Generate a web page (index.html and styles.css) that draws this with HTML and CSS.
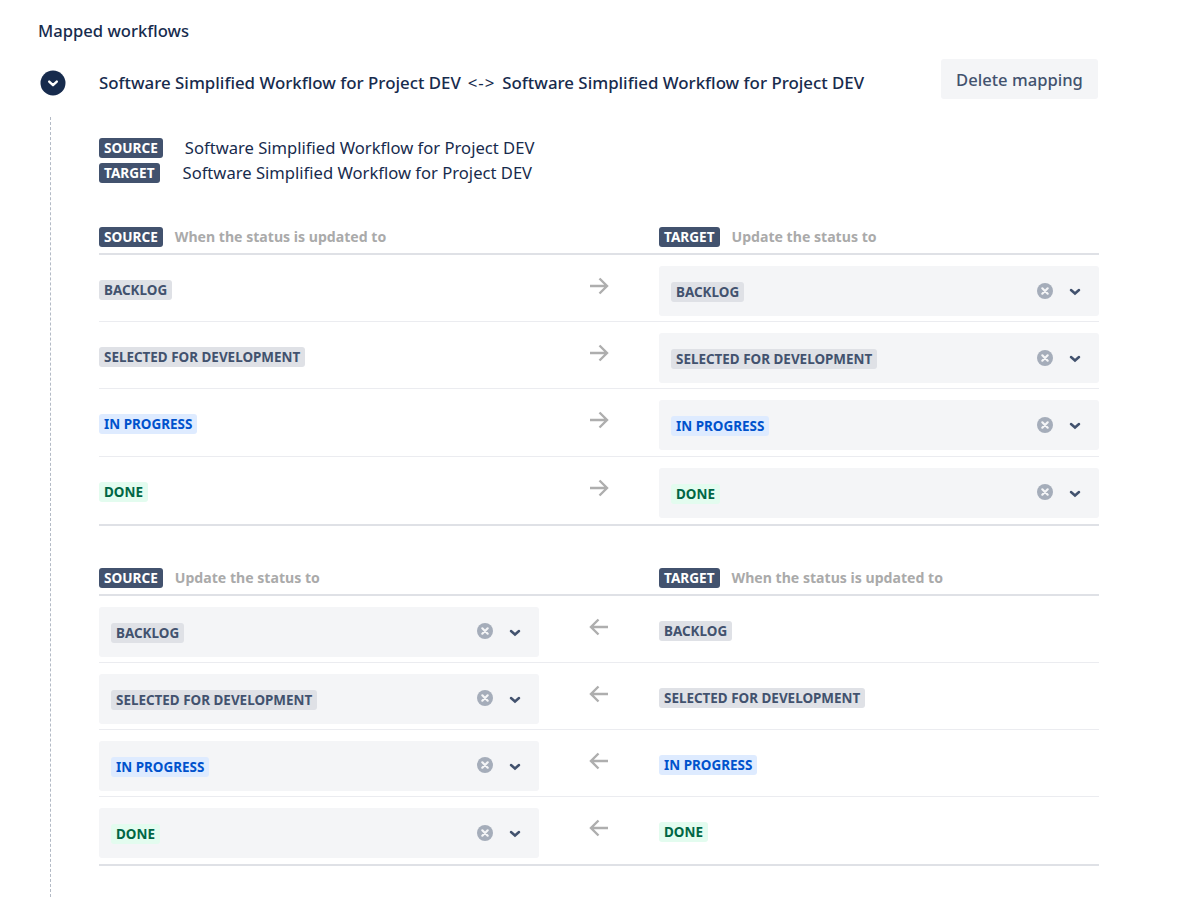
FILE: index.html
```html
<!DOCTYPE html>
<html lang="en">
<head>
<meta charset="utf-8">
<title>Mapped workflows</title>
<link rel="stylesheet" href="styles.css">
</head>
<body>
<main class="page">
  <h1 class="title">Mapped workflows</h1>
  <div class="map-head">
    <button class="toggle" aria-label="Collapse"><svg width="26" height="26" viewBox="0 0 26 26"><circle cx="13" cy="13" r="12.5" fill="#172b4d"/><path d="M9.2 11.6 13 15.2l3.8-3.6" fill="none" stroke="#fff" stroke-width="2.4" stroke-linecap="round" stroke-linejoin="round"/></svg></button>
    <div class="map-title">Software Simplified Workflow for Project DEV <span class="swap">&lt;-&gt;</span> Software Simplified Workflow for Project DEV</div>
    <button class="delete">Delete mapping</button>
  </div>
  <div class="map-body">
    <div class="legend">
      <div class="legend-row"><span class="tag">SOURCE</span><span class="legend-name source-name">Software Simplified Workflow for Project DEV</span></div>
      <div class="legend-row"><span class="tag">TARGET</span><span class="legend-name target-name">Software Simplified Workflow for Project DEV</span></div>
    </div>

    <section class="table">
      <div class="row head">
        <div class="head-cell"><span class="tag">SOURCE</span><span class="hint">When the status is updated to</span></div>
        <div></div>
        <div class="head-cell"><span class="tag">TARGET</span><span class="hint">Update the status to</span></div>
      </div>
      <div class="row">
        <div class="plain"><span class="loz grey">BACKLOG</span></div>
        <div class="arrow"><svg width="20" height="18" viewBox="0 0 20 18"><path d="M1 9h17M10.500 1.500 18 9l-7.500 7.500" fill="none" stroke="#aeaeae" stroke-width="2.400"/></svg></div>
        <div class="select"><span class="loz grey">BACKLOG</span><svg class="clear" width="16" height="16" viewBox="0 0 16 16"><circle cx="8" cy="8" r="8" fill="#a5adba"/><path d="m5.300 5.300 5.400 5.400m0-5.400-5.400 5.400" stroke="#f4f5f7" stroke-width="2.200" stroke-linecap="round"/></svg><svg class="chev" width="12" height="8" viewBox="0 0 12 8"><path d="M2 2 6 5.500 10 2" fill="none" stroke="#42526e" stroke-width="2.500" stroke-linecap="round"/></svg></div>
      </div>
      <div class="row">
        <div class="plain"><span class="loz grey">SELECTED FOR DEVELOPMENT</span></div>
        <div class="arrow"><svg width="20" height="18" viewBox="0 0 20 18"><path d="M1 9h17M10.500 1.500 18 9l-7.500 7.500" fill="none" stroke="#aeaeae" stroke-width="2.400"/></svg></div>
        <div class="select"><span class="loz grey">SELECTED FOR DEVELOPMENT</span><svg class="clear" width="16" height="16" viewBox="0 0 16 16"><circle cx="8" cy="8" r="8" fill="#a5adba"/><path d="m5.300 5.300 5.400 5.400m0-5.400-5.400 5.400" stroke="#f4f5f7" stroke-width="2.200" stroke-linecap="round"/></svg><svg class="chev" width="12" height="8" viewBox="0 0 12 8"><path d="M2 2 6 5.500 10 2" fill="none" stroke="#42526e" stroke-width="2.500" stroke-linecap="round"/></svg></div>
      </div>
      <div class="row">
        <div class="plain"><span class="loz blue">IN PROGRESS</span></div>
        <div class="arrow"><svg width="20" height="18" viewBox="0 0 20 18"><path d="M1 9h17M10.500 1.500 18 9l-7.500 7.500" fill="none" stroke="#aeaeae" stroke-width="2.400"/></svg></div>
        <div class="select"><span class="loz blue">IN PROGRESS</span><svg class="clear" width="16" height="16" viewBox="0 0 16 16"><circle cx="8" cy="8" r="8" fill="#a5adba"/><path d="m5.300 5.300 5.400 5.400m0-5.400-5.400 5.400" stroke="#f4f5f7" stroke-width="2.200" stroke-linecap="round"/></svg><svg class="chev" width="12" height="8" viewBox="0 0 12 8"><path d="M2 2 6 5.500 10 2" fill="none" stroke="#42526e" stroke-width="2.500" stroke-linecap="round"/></svg></div>
      </div>
      <div class="row last">
        <div class="plain"><span class="loz green">DONE</span></div>
        <div class="arrow"><svg width="20" height="18" viewBox="0 0 20 18"><path d="M1 9h17M10.500 1.500 18 9l-7.500 7.500" fill="none" stroke="#aeaeae" stroke-width="2.400"/></svg></div>
        <div class="select"><span class="loz green">DONE</span><svg class="clear" width="16" height="16" viewBox="0 0 16 16"><circle cx="8" cy="8" r="8" fill="#a5adba"/><path d="m5.300 5.300 5.400 5.400m0-5.400-5.400 5.400" stroke="#f4f5f7" stroke-width="2.200" stroke-linecap="round"/></svg><svg class="chev" width="12" height="8" viewBox="0 0 12 8"><path d="M2 2 6 5.500 10 2" fill="none" stroke="#42526e" stroke-width="2.500" stroke-linecap="round"/></svg></div>
      </div>
    </section>

    <section class="table second">
      <div class="row head">
        <div class="head-cell"><span class="tag">SOURCE</span><span class="hint">Update the status to</span></div>
        <div></div>
        <div class="head-cell"><span class="tag">TARGET</span><span class="hint">When the status is updated to</span></div>
      </div>
      <div class="row">
        <div class="select"><span class="loz grey">BACKLOG</span><svg class="clear" width="16" height="16" viewBox="0 0 16 16"><circle cx="8" cy="8" r="8" fill="#a5adba"/><path d="m5.300 5.300 5.400 5.400m0-5.400-5.400 5.400" stroke="#f4f5f7" stroke-width="2.200" stroke-linecap="round"/></svg><svg class="chev" width="12" height="8" viewBox="0 0 12 8"><path d="M2 2 6 5.500 10 2" fill="none" stroke="#42526e" stroke-width="2.500" stroke-linecap="round"/></svg></div>
        <div class="arrow"><svg width="20" height="18" viewBox="0 0 20 18"><path d="M19 9H2M9.500 1.500 2 9l7.500 7.500" fill="none" stroke="#aeaeae" stroke-width="2.400"/></svg></div>
        <div class="plain"><span class="loz grey">BACKLOG</span></div>
      </div>
      <div class="row">
        <div class="select"><span class="loz grey">SELECTED FOR DEVELOPMENT</span><svg class="clear" width="16" height="16" viewBox="0 0 16 16"><circle cx="8" cy="8" r="8" fill="#a5adba"/><path d="m5.300 5.300 5.400 5.400m0-5.400-5.400 5.400" stroke="#f4f5f7" stroke-width="2.200" stroke-linecap="round"/></svg><svg class="chev" width="12" height="8" viewBox="0 0 12 8"><path d="M2 2 6 5.500 10 2" fill="none" stroke="#42526e" stroke-width="2.500" stroke-linecap="round"/></svg></div>
        <div class="arrow"><svg width="20" height="18" viewBox="0 0 20 18"><path d="M19 9H2M9.500 1.500 2 9l7.500 7.500" fill="none" stroke="#aeaeae" stroke-width="2.400"/></svg></div>
        <div class="plain"><span class="loz grey">SELECTED FOR DEVELOPMENT</span></div>
      </div>
      <div class="row">
        <div class="select"><span class="loz blue">IN PROGRESS</span><svg class="clear" width="16" height="16" viewBox="0 0 16 16"><circle cx="8" cy="8" r="8" fill="#a5adba"/><path d="m5.300 5.300 5.400 5.400m0-5.400-5.400 5.400" stroke="#f4f5f7" stroke-width="2.200" stroke-linecap="round"/></svg><svg class="chev" width="12" height="8" viewBox="0 0 12 8"><path d="M2 2 6 5.500 10 2" fill="none" stroke="#42526e" stroke-width="2.500" stroke-linecap="round"/></svg></div>
        <div class="arrow"><svg width="20" height="18" viewBox="0 0 20 18"><path d="M19 9H2M9.500 1.500 2 9l7.500 7.500" fill="none" stroke="#aeaeae" stroke-width="2.400"/></svg></div>
        <div class="plain"><span class="loz blue">IN PROGRESS</span></div>
      </div>
      <div class="row last">
        <div class="select"><span class="loz green">DONE</span><svg class="clear" width="16" height="16" viewBox="0 0 16 16"><circle cx="8" cy="8" r="8" fill="#a5adba"/><path d="m5.300 5.300 5.400 5.400m0-5.400-5.400 5.400" stroke="#f4f5f7" stroke-width="2.200" stroke-linecap="round"/></svg><svg class="chev" width="12" height="8" viewBox="0 0 12 8"><path d="M2 2 6 5.500 10 2" fill="none" stroke="#42526e" stroke-width="2.500" stroke-linecap="round"/></svg></div>
        <div class="arrow"><svg width="20" height="18" viewBox="0 0 20 18"><path d="M19 9H2M9.500 1.500 2 9l7.500 7.500" fill="none" stroke="#aeaeae" stroke-width="2.400"/></svg></div>
        <div class="plain"><span class="loz green">DONE</span></div>
      </div>
    </section>
  </div>
</main>
</body>
</html>
```

FILE: styles.css
```css
* { box-sizing: border-box; }
html, body { margin: 0; background: #fff; }
body {
  height: 907px;
  overflow: hidden;
  font-family: "Noto Sans", "Open Sans", sans-serif;
  color: #172b4d;
}
.page { padding: 20px 86px 0 38px; }
.title { margin: 0; font-size: 16.6px; line-height: 22px; font-weight: 500; }
.map-head { display: flex; align-items: center; height: 40px; margin-top: 17px; padding-left: 2px; }
.toggle { width: 26px; height: 26px; padding: 0; border: 0; background: none; flex: none; margin-top: 7px; }
.toggle svg { display: block; }
.map-title { margin-left: 33px; flex: 1; font-size: 16.85px; font-weight: 500; line-height: 22px; margin-top: 7px; white-space: nowrap; }
.swap { margin: 0 2.5px; font-weight: 400; letter-spacing: 1px; }
.delete {
  width: 157px; height: 40px; margin-right: 1px; border: 0; border-radius: 3px; background: #f4f5f7;
  color: #42526e; font: 500 16.6px/22px "Noto Sans", sans-serif; padding: 1px 0 0;
}
.map-body { margin: 18px 0 0 12px; padding: 18px 0 0 48px; border-left: 1px dashed #b3bac5; height: 780px; }
.legend-row { display: flex; align-items: center; height: 25px; }
.tag {
  display: inline-block; height: 20px; padding: 0 5px; border-radius: 3px; background: #42526e;
  color: #fff; font-size: 13.6px; font-weight: 700; line-height: 20px; flex: none;
}
.legend-name { font-size: 16.6px; line-height: 22px; color: #172b4d; }
.source-name { margin-left: 22px; }
.target-name { margin-left: 23px; }
.table { margin-top: 39px; }
.second { margin-top: 39px; }
.row {
  display: grid; grid-template-columns: 440px 120px 440px;
  height: 67.2px; border-bottom: 1px solid #ebecf0; align-items: start;
}
.row.head { height: 31px; border-bottom: 2px solid #dfe1e6; }
.row.last { height: 69px; border-bottom: 2px solid #dfe1e6; }
.head-cell { display: flex; align-items: center; height: 24px; margin-top: 1px; }
.hint { margin-left: 12px; color: #aaa; font-size: 14.1px; font-weight: 700; line-height: 20px; }
.plain { margin-top: 25px; display: flex; }
.arrow { display: flex; justify-content: center; margin-top: 22px; }
.arrow svg { display: block; }
.select {
  display: flex; align-items: center; height: 50px; margin-top: 11px; padding: 2px 16px 0 12px;
  border-radius: 3px; background: #f4f5f7;
}
.clear { margin-left: auto; margin-top: -3px; }
.chev { margin-left: 16px; margin-right: 2px; }
.loz {
  display: inline-block; height: 20px; padding: 0 5px; border-radius: 3px;
  font-size: 13.45px; font-weight: 700; line-height: 20px; white-space: nowrap;
}
.grey { background: #dfe1e6; color: #42526e; }
.blue { background: #deebff; color: #0052cc; }
.green { background: #e3fcef; color: #006644; }
```
